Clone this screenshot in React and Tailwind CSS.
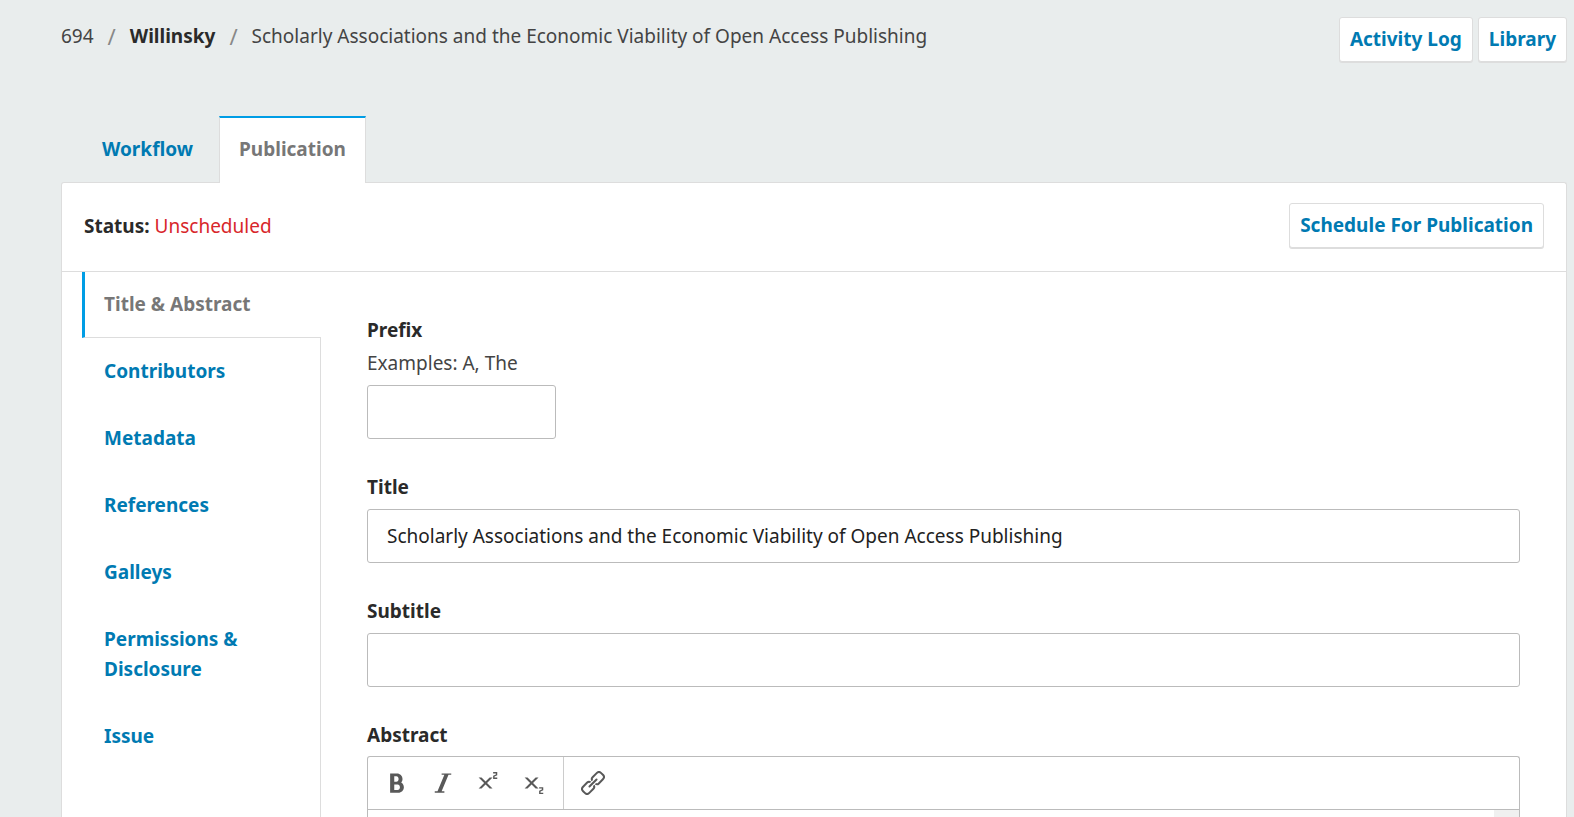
import { ImBold, ImItalic, ImSuperscript, ImSubscript } from "react-icons/im";

const sections = ["Contributors", "Metadata", "References", "Galleys", "Permissions & Disclosure", "Issue"];

const TOOLS = [
  { name: "Bold", Icon: ImBold },
  { name: "Italic", Icon: ImItalic },
  { name: "Superscript", Icon: ImSuperscript },
  { name: "Subscript", Icon: ImSubscript },
];

function ChainIcon() {
  return (
    <svg width="24" height="24" viewBox="0 0 24 24" fill="none" stroke="currentColor" strokeWidth="2" aria-hidden="true">
      <g transform="rotate(-45 12 12)">
        <path d="M10.8 9.8 Q10.4 7.6 8.2 7.6 H2.4 Q-0.8 7.6 -0.8 10.8 V13.2 Q-0.8 16.4 2.4 16.4 H8.2 Q10.4 16.4 10.8 14.2" />
        <path d="M13.2 9.8 Q13.6 7.6 15.8 7.6 H21.6 Q24.8 7.6 24.8 10.8 V13.2 Q24.8 16.4 21.6 16.4 H15.8 Q13.6 16.4 13.2 14.2" />
        <path d="M7 12 H17" strokeLinecap="round" />
      </g>
    </svg>
  );
}

function ActionButton({ children }) {
  return (
    <button
      type="button"
      className="rounded-[3px] border border-[#ddd] bg-white px-[10px] pt-[6px] pb-[7px] font-bold text-[#007ab2] shadow-[0_1px_0_#ddd]"
    >
      {children}
    </button>
  );
}

function Field({ id, label, hint, narrow, value }) {
  return (
    <div className="mb-[33px]">
      <label htmlFor={id} className="block font-bold">
        {label}
      </label>
      {hint && (
        <p id={`${id}-hint`} className="mt-[3px] text-[#444]">
          {hint}
        </p>
      )}
      <input
        id={id}
        type="text"
        defaultValue={value}
        aria-describedby={hint ? `${id}-hint` : undefined}
        className={`mt-[7px] block h-[54px] rounded-[3px] border border-[#bbb] bg-white px-[19px] text-[#222] ${narrow ? "w-[189px]" : "w-full"}`}
      />
    </div>
  );
}

export default function App() {
  return (
    <div className="flex h-screen flex-col overflow-hidden bg-[#e9eded] pl-[61px] pr-[7px] font-['Noto_Sans',sans-serif] text-[19px] leading-[30px] text-[#2a2a2a]">
      <header className="flex items-start justify-between pt-[17px]">
        <nav aria-label="Breadcrumb" className="pt-1 text-[#444]">
          <ol className="flex gap-[14px]">
            <li>694</li>
            <li aria-hidden="true" className="text-[22px] text-[#888]">/</li>
            <li className="font-bold text-[#2a2a2a]">Willinsky</li>
            <li aria-hidden="true" className="text-[22px] text-[#888]">/</li>
            <li>Scholarly Associations and the Economic Viability of Open Access Publishing</li>
          </ol>
        </nav>
        <div className="flex gap-[5px]">
          <ActionButton>Activity Log</ActionButton>
          <ActionButton>Library</ActionButton>
        </div>
      </header>

      <div role="tablist" className="relative z-10 -mb-px mt-[54px] flex pl-[21px] font-bold">
        <button type="button" role="tab" aria-selected="false" className="px-5 pt-[18px] pb-[19px] text-[#007ab2]">
          Workflow
        </button>
        <button
          type="button"
          role="tab"
          aria-selected="true"
          className="ml-[6px] border-x border-t-2 border-x-[#ddd] border-t-[#009de5] bg-white px-[19px] pt-4 pb-[19px] text-[#777]"
        >
          Publication
        </button>
      </div>

      <main className="flex min-h-0 flex-1 flex-col rounded-t-[3px] border border-b-0 border-[#ddd] bg-white">
        <div className="flex items-center justify-between border-b border-[#ddd] px-[22px] pt-5 pb-[23px]">
          <p>
            <strong className="font-bold">Status:</strong> <span className="text-[#d8262a]">Unscheduled</span>
          </p>
          <ActionButton>Schedule For Publication</ActionButton>
        </div>

        <div className="flex min-h-0 flex-1">
          <nav aria-label="Publication sections" className="flex w-[259px] shrink-0 flex-col pl-5 font-bold text-[#007ab2]">
            <a
              href="#title"
              aria-current="page"
              className="border-b border-l-[3px] border-b-[#ddd] border-l-[#009de5] pt-[17px] pb-[18px] pl-[19px] text-[#777]"
            >
              Title &amp; Abstract
            </a>
            <ul className="flex-1 border-r border-[#ddd]">
              {sections.map((name) => (
                <li key={name}>
                  <a href="#section" className="block pt-[18px] pb-[19px] pl-[22px] pr-16">
                    {name}
                  </a>
                </li>
              ))}
            </ul>
          </nav>

          <form className="flex min-w-0 flex-1 flex-col px-[46px] pt-[43px]">
            <Field id="prefix" label="Prefix" hint="Examples: A, The" narrow />
            <Field
              id="title"
              label="Title"
              value="Scholarly Associations and the Economic Viability of Open Access Publishing"
            />
            <Field id="subtitle" label="Subtitle" />
            <label htmlFor="abstract" className="block font-bold">
              Abstract
            </label>
            <div className="mt-[6px] flex min-h-0 flex-1 flex-col rounded-t-[3px] border border-b-0 border-[#bbb]">
              <div role="toolbar" aria-label="Formatting" className="flex h-[53px] shrink-0 border-b border-[#bbb] text-[#595959]">
                <div className="flex items-center gap-[2px] border-r border-[#ccc] pl-[7px] pr-[6px]">
                  {TOOLS.map(({ name, Icon }) => (
                    <button key={name} type="button" aria-label={name} className="flex size-11 items-center justify-center">
                      <Icon size={22} />
                    </button>
                  ))}
                </div>
                <div className="flex items-center pl-[7px] pr-[6px]">
                  <button type="button" aria-label="Link" className="flex size-11 items-center justify-center">
                    <ChainIcon />
                  </button>
                </div>
              </div>
              <div className="flex min-h-0 flex-1">
                <textarea id="abstract" className="min-w-0 flex-1 resize-none overflow-hidden bg-white px-[19px]" />
                <div className="w-[25px] bg-[#f0f0f0]" />
              </div>
            </div>
          </form>
        </div>
      </main>
    </div>
  );
}
